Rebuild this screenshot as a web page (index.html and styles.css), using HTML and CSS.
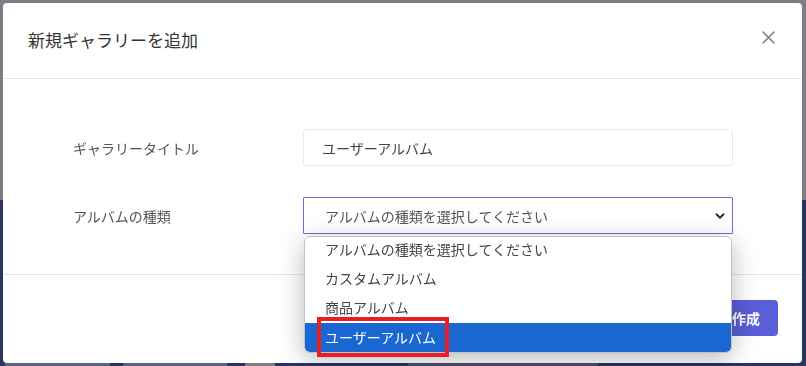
FILE: index.html
```html
<!DOCTYPE html>
<html lang="ja">
<head>
  <meta charset="UTF-8" />
  <meta name="viewport" content="width=device-width, initial-scale=1.0"/>
  <title>新規ギャラリーを追加</title>
  <link rel="stylesheet" href="styles.css">
</head>
<body>
  <div class="backdrop">
    <div class="backdrop-top"></div>
    <div class="backdrop-bottom">
      <span class="strip s1"></span>
      <span class="strip s2"></span>
      <span class="strip s3"></span>
      <span class="strip s4"></span>
    </div>
  </div>

  <div class="modal">
    <div class="modal-header">
      <h2 class="modal-title">新規ギャラリーを追加</h2>
      <svg class="close" width="13" height="13" viewBox="0 0 13 13">
        <path d="M1 1 L12 12 M12 1 L1 12" stroke="#858585" stroke-width="1.6" stroke-linecap="round"/>
      </svg>
    </div>

    <div class="modal-body">
      <div class="form-row">
        <label class="form-label">ギャラリータイトル</label>
        <div class="form-field">
          <div class="input">ユーザーアルバム</div>
        </div>
      </div>
      <div class="form-row">
        <label class="form-label">アルバムの種類</label>
        <div class="form-field">
          <div class="select">
            <span>アルバムの種類を選択してください</span>
            <svg class="chevron" width="12" height="12" viewBox="0 0 12 12">
              <path d="M2.5 4.2 L6 7.7 L9.5 4.2" fill="none" stroke="#333" stroke-width="2" stroke-linecap="round" stroke-linejoin="round"/>
            </svg>
          </div>
          <ul class="dropdown">
            <li>アルバムの種類を選択してください</li>
            <li>カスタムアルバム</li>
            <li>商品アルバム</li>
            <li class="active"><span class="marked">ユーザーアルバム</span></li>
          </ul>
        </div>
      </div>
    </div>

    <div class="modal-footer">
      <button class="btn-primary">作成</button>
    </div>
  </div>
</body>
</html>
```

FILE: styles.css
```css
* {
  margin: 0;
  padding: 0;
  box-sizing: border-box;
}

html, body {
  width: 100%;
  height: 100%;
  overflow: hidden;
  font-family: 'Noto Sans CJK JP', 'Noto Sans', sans-serif;
  background-color: #2b3461;
}

.backdrop {
  position: fixed;
  inset: 0;
  display: flex;
  flex-direction: column;
}

.backdrop-top {
  height: 200px;
  background: #7e7d86;
}

.backdrop-bottom {
  flex: 1;
  background: #2b3461;
  position: relative;
}

.strip {
  position: absolute;
  bottom: 0;
  height: 4px;
}
.s1 { left: 5px; width: 105px; background: #5d6079; }
.s2 { left: 123px; width: 104px; background: #5d6079; }
.s3 { left: 245px; width: 30px; background: #7e7d86; }
.s4 { left: 408px; width: 190px; background: #4c4f6c; }

.modal {
  position: absolute;
  top: 3px;
  left: 3px;
  width: 799px;
  height: 360px;
  background: #fff;
  border-radius: 4px;
  display: flex;
  flex-direction: column;
}

.modal-header {
  height: 76px;
  border-bottom: 1px solid #e6e6e6;
  display: flex;
  align-items: center;
  justify-content: space-between;
  padding: 0 27px 2px 25px;
}

.modal-title {
  font-size: 17px;
  font-weight: normal;
  color: #333;
}

.close {
  margin-top: -4px;
}

.modal-body {
  padding: 50px 69px 40px 70px;
  display: flex;
  flex-direction: column;
  gap: 31px;
  border-bottom: 1px solid #e6e6e6;
}

.form-row {
  display: grid;
  grid-template-columns: 230px 1fr;
  align-items: center;
}

.form-label {
  font-size: 14px;
  color: #555;
}

.form-field {
  position: relative;
}

.input, .select {
  height: 37px;
  border: 1px solid #e8e8ee;
  border-radius: 3px;
  font-size: 14px;
  color: #444;
  display: flex;
  align-items: center;
  padding: 0 18px;
}

.select {
  border-color: #7668cf;
  border-radius: 1px;
  justify-content: space-between;
  padding: 0 6px 0 21px;
  color: #555;
}

.dropdown {
  position: absolute;
  top: 39px;
  left: 1px;
  right: 1px;
  list-style: none;
  background: #fff;
  border: 1px solid #c4c4c4;
  border-radius: 6px;
  box-shadow: 0 6px 26px rgba(0, 0, 0, 0.28);
  z-index: 5;
}

.dropdown li {
  height: 29px;
  font-size: 14px;
  color: #444;
  display: flex;
  align-items: center;
  padding: 0 0 3px 20px;
}

.dropdown li:first-child {
  height: 28px;
  align-items: flex-start;
  padding-top: 2px;
}

.dropdown li.active {
  background: #1a67d2;
  color: #fff;
  border-radius: 0 0 5px 5px;
  padding-bottom: 2px;
}

.marked {
  position: relative;
}

.marked::after {
  content: "";
  position: absolute;
  left: -8px;
  right: -13px;
  top: -10px;
  bottom: -10px;
  border: 4px solid #ec1c24;
}

.modal-footer {
  flex: 1;
  display: flex;
  align-items: center;
  justify-content: flex-end;
  padding: 0 24px 2px 0;
}

.btn-primary {
  height: 36px;
  padding: 0 18px;
  border: none;
  border-radius: 4px;
  background: #5a5fd9;
  color: #fff;
  font-family: inherit;
  font-size: 14px;
  font-weight: bold;
}
```
